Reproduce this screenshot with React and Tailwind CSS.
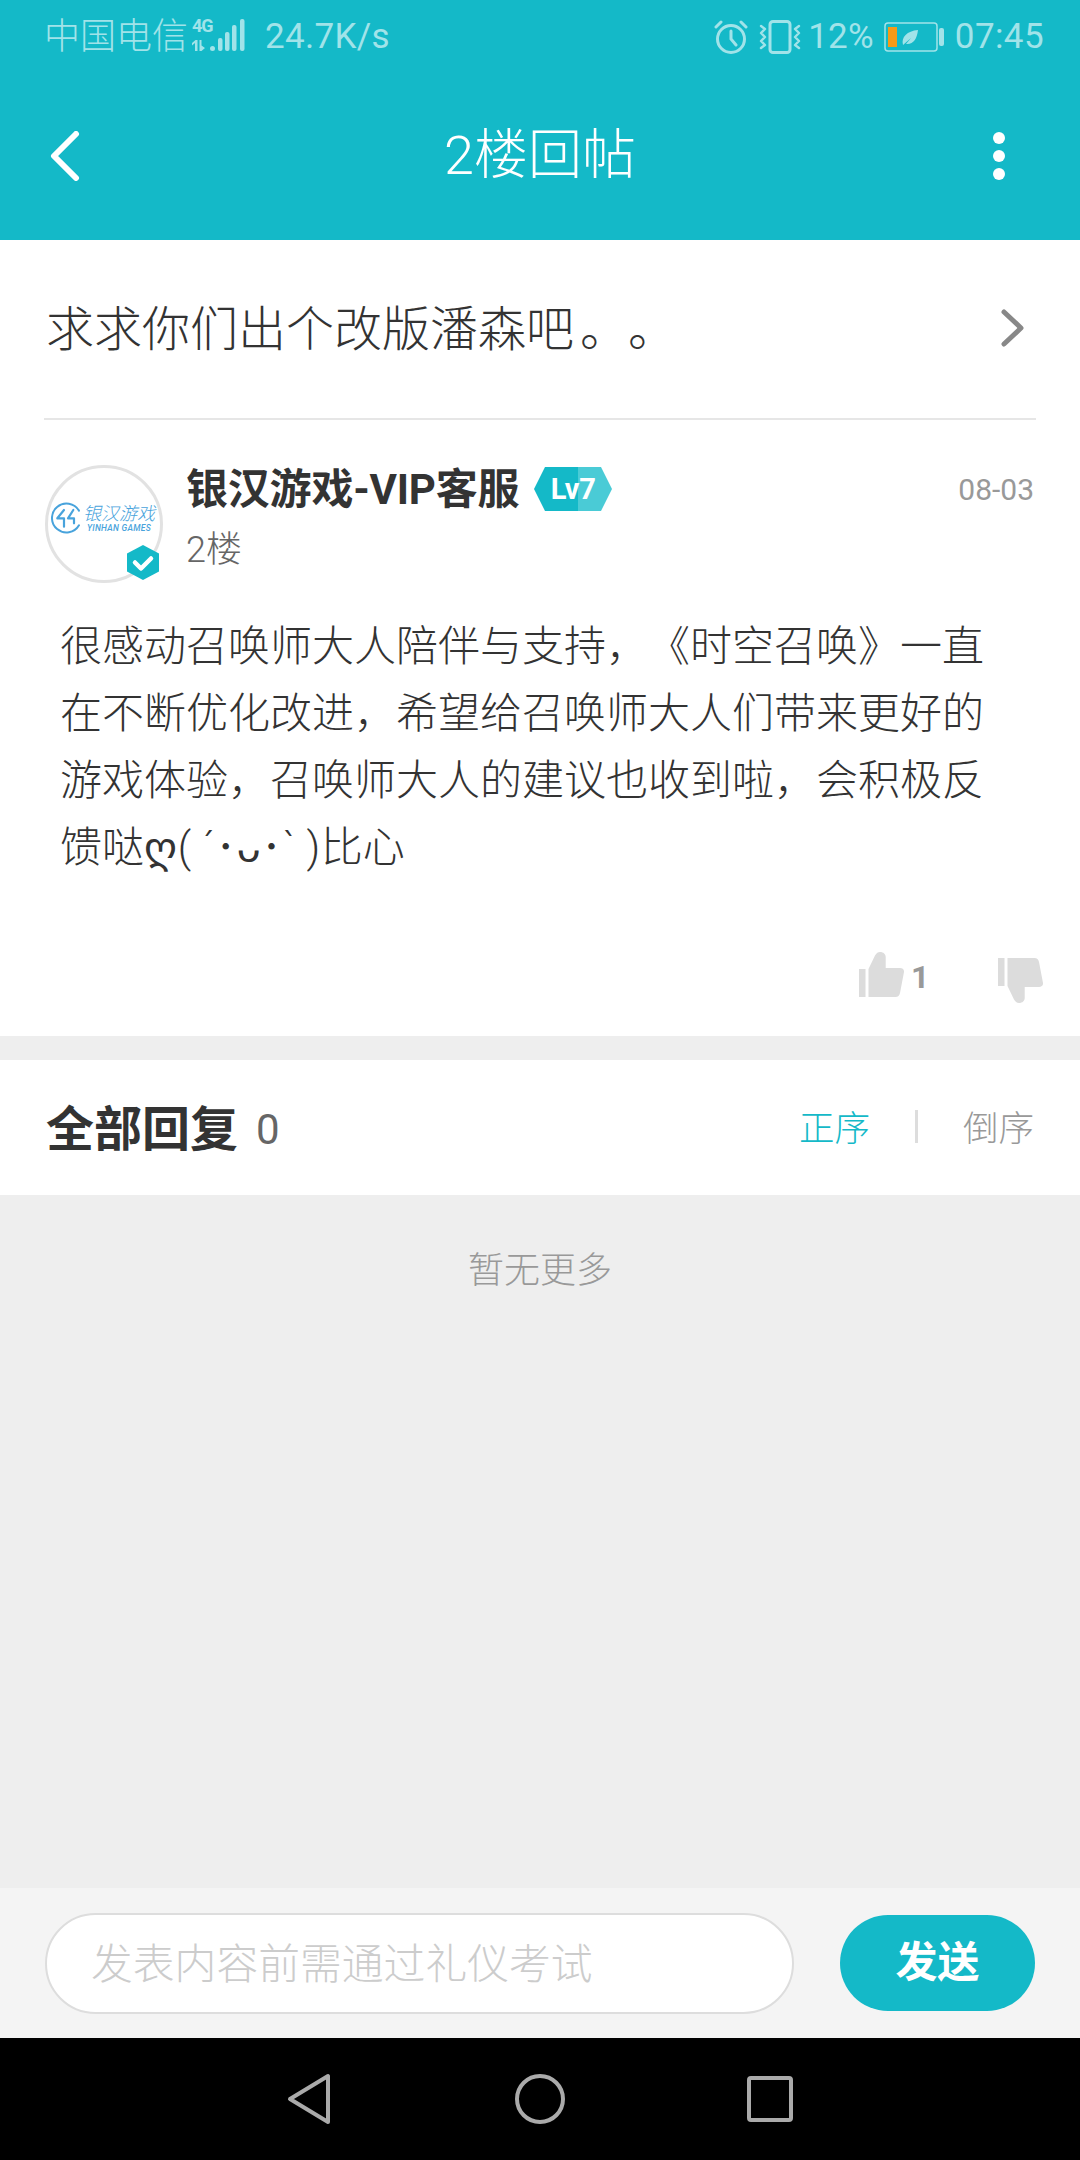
import React from "react";

function Signal() {
  return (
    <svg width="53" height="32" viewBox="0 0 53 32" className="block" fill="#a1e3e9">
      <path d="M3 32V24l-3 2.500V24l3.500-3H5.500v11zM7.500 21h2v5.500l3.500 2.500-3.500 3h-2z" />
      <circle cx="20.500" cy="29.500" r="2.500" />
      <rect x="26" y="19" width="4.500" height="13" rx="2" />
      <rect x="33" y="13" width="4.500" height="19" rx="2" />
      <rect x="40" y="6" width="4.500" height="26" rx="2" />
      <rect x="48" y="0" width="4.500" height="32" rx="2" />
    </svg>
  );
}

function Alarm() {
  return (
    <svg width="34" height="34" viewBox="0 0 34 34" fill="none" stroke="#a1e3e9" strokeWidth="3" strokeLinecap="round" className="block">
      <circle cx="17" cy="19" r="13.500" />
      <path d="M17 11v8l5 6M2 7l5-5M32 7l-5-5" />
    </svg>
  );
}

function Vibrate() {
  return (
    <svg width="42" height="34" viewBox="0 0 42 34" fill="none" stroke="#a1e3e9" strokeWidth="3" strokeLinecap="round" strokeLinejoin="round" className="block">
      <rect x="11" y="1.500" width="20" height="31" rx="3" />
      <path d="M2 6l4 3-4 4 4 4-4 4 4 4-4 3M40 6l-4 3 4 4-4 4 4 4-4 4 4 3" strokeWidth="2.400" />
    </svg>
  );
}

function Battery() {
  return (
    <svg width="61" height="30" viewBox="0 0 61 30" className="block">
      <rect x="1" y="1" width="52" height="28" rx="3" fill="none" stroke="#a1e3e9" strokeWidth="1.500" />
      <rect x="4" y="5" width="9" height="20" fill="#f79a16" />
      <path d="M19 23c-2-8 4-14 15-15-1 9-5 15-12 14l5-6-8 7z" fill="#a1e3e9" />
      <rect x="55" y="6" width="5" height="18" rx="2" fill="#a1e3e9" />
    </svg>
  );
}

function ThumbUp({ down }) {
  return (
    <svg width="45" height="45" viewBox="0 0 45 45" fill="#dcdcdc" className="block">
      <g transform={down ? "translate(0 45) scale(1 -1)" : undefined}>
        <rect x="0" y="17" width="6.500" height="28" />
        <path d="M9.500 17 16 3.500C17.500 1 19 0 21 0c3.500 0 5.700 2.300 5.700 5v11H41c2.800 0 4.300 1.800 4 4l-4 21c-.6 2.500-2 4-4.500 4H9.500z" />
      </g>
    </svg>
  );
}

function Logo() {
  return (
    <svg width="32" height="34" viewBox="0 0 32 34" fill="none" stroke="#48a3dc" strokeWidth="2" strokeLinecap="round" strokeLinejoin="round" className="block">
      <path d="M28 9.700A14.500 14.500 0 1 0 28 24.300" />
      <path d="M13 9 6.300 17.300H13V25.700M22.300 9 17 17.300H23V22.300" strokeWidth="2.200" />
    </svg>
  );
}

export default function App() {
  return (
    <div className="w-[1080px] h-[2160px] flex flex-col bg-white overflow-hidden [text-spacing-trim:space-all] font-['Roboto','Noto_Sans_CJK_SC',sans-serif]">
      <header className="h-[240px] bg-[#14b9c8] text-white shrink-0">
        <div className="h-[74px] flex items-center pl-[44px] pr-[36px] text-[35px] text-[#a1e3e9]">
          <span className="w-[144px] text-[36px] leading-none font-light">中国电信</span>
          <span className="relative ml-[4px] w-[53px] h-[32px] mt-[-4px]">
            <Signal />
            <span className="absolute left-0 top-[-3px] text-[18px] font-bold leading-[20px] tracking-[-1px] text-[#a1e3e9]">4G</span>
          </span>
          <span className="ml-[20px] tracking-[0.3px]">24.7K/s</span>
          <span className="ml-auto flex items-center">
            <Alarm />
            <span className="ml-[11px]"><Vibrate /></span>
            <span className="ml-[7px] tracking-[0.2px]">12%</span>
            <span className="ml-[10px]"><Battery /></span>
            <span className="ml-[10px] tracking-[0.4px]">07:45</span>
          </span>
        </div>
        <div className="h-[166px] pb-[2px] flex items-center">
          <div className="w-[200px] pl-[50px]">
            <svg width="30" height="50" viewBox="0 0 30 50" fill="none" stroke="#fff" strokeWidth="6" strokeLinecap="round" strokeLinejoin="round" className="block">
              <path d="M26 3 4 25l22 22" />
            </svg>
          </div>
          <div className="flex-1 text-center text-[54px] leading-none font-light">2楼回帖</div>
          <div className="w-[200px] pr-[75px] flex flex-col items-end gap-[6px]">
            <span className="w-[12px] h-[12px] rounded-full bg-white" />
            <span className="w-[12px] h-[12px] rounded-full bg-white" />
            <span className="w-[12px] h-[12px] rounded-full bg-white" />
          </div>
        </div>
      </header>

      <section className="mx-[44px] h-[180px] border-b-2 border-[#e6e6e6] shrink-0 flex items-center justify-between pl-[2px] pr-[9px]">
        <span className="text-[48px] text-[#333] leading-none font-light mt-[2px] whitespace-nowrap">
          求求你们出个改版潘森吧<span className="ml-[6px]">。。</span>
        </span>
        <svg width="28" height="40" viewBox="0 0 28 40" fill="none" stroke="#888" strokeWidth="5" strokeLinecap="round" strokeLinejoin="round" className="block mt-[-2px]">
          <path d="M5 4l17 16L5 36" />
        </svg>
      </section>

      <section className="h-[616px] shrink-0 flex flex-col">
        <div className="flex pl-[45px] pr-[46px] pt-[45px]">
          <div className="relative w-[118px] h-[118px] rounded-full border-[3px] border-[#e2e2e2] shrink-0">
            <div className="absolute left-[3px] top-[33px] flex items-center">
              <Logo />
              <div className="flex flex-col items-center">
                <span className="text-[18px] leading-[20px] text-[#48a3dc] whitespace-nowrap font-light italic">银汉游戏</span>
                <span className="text-[8.500px] leading-[9px] text-[#48a3dc] whitespace-nowrap tracking-[0.3px] italic font-medium">YINHAN GAMES</span>
              </div>
            </div>
            <svg width="32" height="35" viewBox="0 0 32 35" className="absolute left-[79px] top-[77px]">
              <path d="M16 0l16 8.500v18L16 35 0 26.500v-18z" fill="#14b9c8" />
              <path d="M8 17.500l6 6 10-10" fill="none" stroke="#fff" strokeWidth="4.500" strokeLinecap="round" strokeLinejoin="round" />
            </svg>
          </div>
          <div className="ml-[23px] flex-1">
            <div className="flex items-center h-[48px]">
              <span className="text-[42px] font-bold text-[#333] leading-none tracking-[-0.2px] mt-[2px]">银汉游戏-VIP客服</span>
              <span className="relative ml-[15px] w-[78px] h-[44px] flex items-center justify-center">
                <svg width="78" height="44" viewBox="0 0 78 44" className="absolute inset-0">
                  <path d="M44 0H11L0 22l11 22h33z" fill="#14b9c8" />
                  <path d="M44 0h23l11 22-11 22H44z" fill="#4acbd6" />
                </svg>
                <span className="relative text-[29px] font-bold text-white leading-none">Lv7</span>
              </span>
              <span className="ml-auto text-[30px] text-[#999] leading-none mt-[2px]">08-03</span>
            </div>
            <div className="mt-[17px] text-[36px] leading-[40px] text-[#666] font-light">2楼</div>
          </div>
        </div>
        <div className="mt-[30px] ml-[60px] text-[42px] leading-[67px] text-[#333] whitespace-nowrap font-light">
          <div>很感动召唤师大人陪伴与支持，《时空召唤》一直</div>
          <div>在不断优化改进，希望给召唤师大人们带来更好的</div>
          <div>游戏体验，召唤师大人的建议也收到啦，会积极反</div>
          <div>馈哒<span className="tracking-[0.7px]">ღ( ´･ᴗ･` )</span>比心</div>
        </div>
        <div className="mt-[71px] pl-[859px] flex items-start">
          <ThumbUp />
          <span className="ml-[7px] mt-[9px] text-[32px] font-bold text-[#999] leading-[32px] w-[21px]">1</span>
          <span className="ml-[66px] mt-[6px]"><ThumbUp down /></span>
        </div>
      </section>

      <div className="h-[24px] bg-[#eeeeee] shrink-0" />

      <section className="h-[135px] shrink-0 flex items-center pl-[46px] pr-[46px]">
        <span className="text-[48px] font-bold text-[#333] leading-none mt-[4px]">全部回复</span>
        <span className="ml-[18px] text-[42px] text-[#666] leading-none mt-[4px]">0</span>
        <span className="ml-auto text-[35.500px] text-[#14b9c8] leading-none mt-[4px] font-light">正序</span>
        <span className="ml-[45px] w-[3px] h-[33px] bg-[#dddddd] mt-[-2px]" />
        <span className="ml-[45px] text-[35.500px] text-[#999] leading-none mt-[4px] font-light">倒序</span>
      </section>

      <main className="flex-1 bg-[#eeeeee] text-center pt-[53px] text-[36px] leading-[46px] text-[#999] font-light">暂无更多</main>

      <section className="h-[150px] bg-[#f4f4f4] shrink-0 flex items-center pl-[45px]">
        <div className="w-[749px] h-[101px] rounded-full border-2 border-[#dddddd] bg-white flex items-center pl-[44px] pt-[3px] text-[41.800px] text-[#cccccc] leading-none whitespace-nowrap font-light">
          发表内容前需通过礼仪考试
        </div>
        <div className="ml-[46px] w-[195px] h-[96px] rounded-full bg-[#14b9c8] flex items-center justify-center text-[42px] font-bold text-white leading-none">
          发送
        </div>
      </section>

      <nav className="h-[122px] bg-black shrink-0 flex items-center justify-center">
        <svg width="44" height="52" viewBox="0 0 44 52" fill="none" stroke="#aaaaaa" strokeWidth="4" strokeLinejoin="round" className="block">
          <path d="M41 3v46L3 26z" />
        </svg>
        <svg width="50" height="50" viewBox="0 0 50 50" fill="none" stroke="#aaaaaa" strokeWidth="4" className="block ml-[184px]">
          <circle cx="25" cy="25" r="23" />
        </svg>
        <svg width="46" height="46" viewBox="0 0 46 46" fill="none" stroke="#aaaaaa" strokeWidth="4" className="block ml-[182px]">
          <rect x="2" y="2" width="42" height="42" rx="2" />
        </svg>
      </nav>
    </div>
  );
}
